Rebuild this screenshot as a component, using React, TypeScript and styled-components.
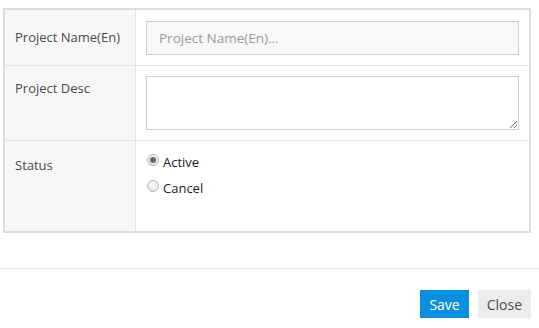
import React from "react";
import styled, { createGlobalStyle } from "styled-components";

const GlobalStyle = createGlobalStyle`
  body {
    margin: 0;
    background: #fff;
    font-family: "Open Sans", "Liberation Sans", Arial, sans-serif;
  }
`;

const Page = styled.div`
  width: 539px;
  height: 328px;
  overflow: hidden;
`;

const Body = styled.div`
  padding: 8px 8px 0 3px;
`;

const FormTable = styled.div`
  display: grid;
  grid-template-columns: 131px 1fr;
  border: 2px solid #dcdcdc;
  background: #fff;
`;

const LabelCell = styled.div<{ $top: number; $last?: boolean }>`
  background: #f7f7f7;
  border-right: 1px solid #e3e3e3;
  border-bottom: ${(p) => (p.$last ? "none" : "1px solid #e3e3e3")};
  padding: ${(p) => p.$top}px 10px 0 10px;
  font-size: 13px;
  line-height: 18px;
  color: #4a4a4a;
`;

const ValueCell = styled.div<{ $last?: boolean; $top?: number; $bottom?: number }>`
  border-bottom: ${(p) => (p.$last ? "none" : "1px solid #e3e3e3")};
  padding: ${(p) => p.$top ?? 10}px 10px ${(p) => p.$bottom ?? 10}px 10px;
`;

const TextInput = styled.input`
  box-sizing: border-box;
  display: block;
  width: 100%;
  height: 34px;
  border: 1px solid #cdcdcd;
  background: #f8f8f8;
  padding: 0 12px;
  font-family: inherit;
  font-size: 13.5px;
  color: #333;
  outline: none;

  &::placeholder {
    color: #9a9a9a;
  }
`;

const TextArea = styled.textarea`
  box-sizing: border-box;
  display: block;
  width: 100%;
  height: 54px;
  border: 1px solid #cdcdcd;
  background: #fff;
  padding: 6px 12px;
  font-family: inherit;
  font-size: 14px;
  resize: vertical;
  outline: none;
`;

const RadioLabel = styled.label`
  display: flex;
  align-items: center;
  height: 26px;
  font-size: 13px;
  color: #222;
`;

const Radio = styled.input`
  appearance: none;
  box-sizing: border-box;
  width: 12px;
  height: 12px;
  margin: 0 4px 0 1px;
  border: 1px solid #b5b5b5;
  border-radius: 50%;
  background: radial-gradient(circle at 50% 35%, #fdfdfd, #dedede);
  position: relative;
  top: -2px;

  &:checked::after {
    content: "";
    position: absolute;
    left: 2px;
    top: 2px;
    width: 6px;
    height: 6px;
    border-radius: 50%;
    background: #666;
  }
`;

const Footer = styled.div`
  margin-top: 35px;
  border-top: 1px solid #e5e5e5;
  display: flex;
  justify-content: flex-end;
  gap: 9px;
  padding: 21px 8px 0 0;
`;

const Button = styled.button<{ $primary?: boolean }>`
  height: 28px;
  padding: 0 9px;
  border: none;
  font-family: inherit;
  font-size: 14px;
  background: ${(p) => (p.$primary ? "#0b8fde" : "#ececec")};
  color: ${(p) => (p.$primary ? "#fff" : "#4a4a4a")};
  cursor: pointer;
`;

const App = () => {
  return (
    <Page>
      <GlobalStyle />
      <Body>
        <FormTable>
          <LabelCell $top={18}>Project Name(En)</LabelCell>
          <ValueCell $top={11}>
            <TextInput placeholder="Project Name(En)..." />
          </ValueCell>

          <LabelCell $top={13}>Project Desc</LabelCell>
          <ValueCell>
            <TextArea />
          </ValueCell>

          <LabelCell $top={15} $last>
            Status
          </LabelCell>
          <ValueCell $last $top={8} $bottom={30}>
            <RadioLabel>
              <Radio type="radio" name="status" defaultChecked />
              Active
            </RadioLabel>
            <RadioLabel>
              <Radio type="radio" name="status" />
              Cancel
            </RadioLabel>
          </ValueCell>
        </FormTable>
      </Body>
      <Footer>
        <Button $primary>Save</Button>
        <Button>Close</Button>
      </Footer>
    </Page>
  );
};

export default App;
